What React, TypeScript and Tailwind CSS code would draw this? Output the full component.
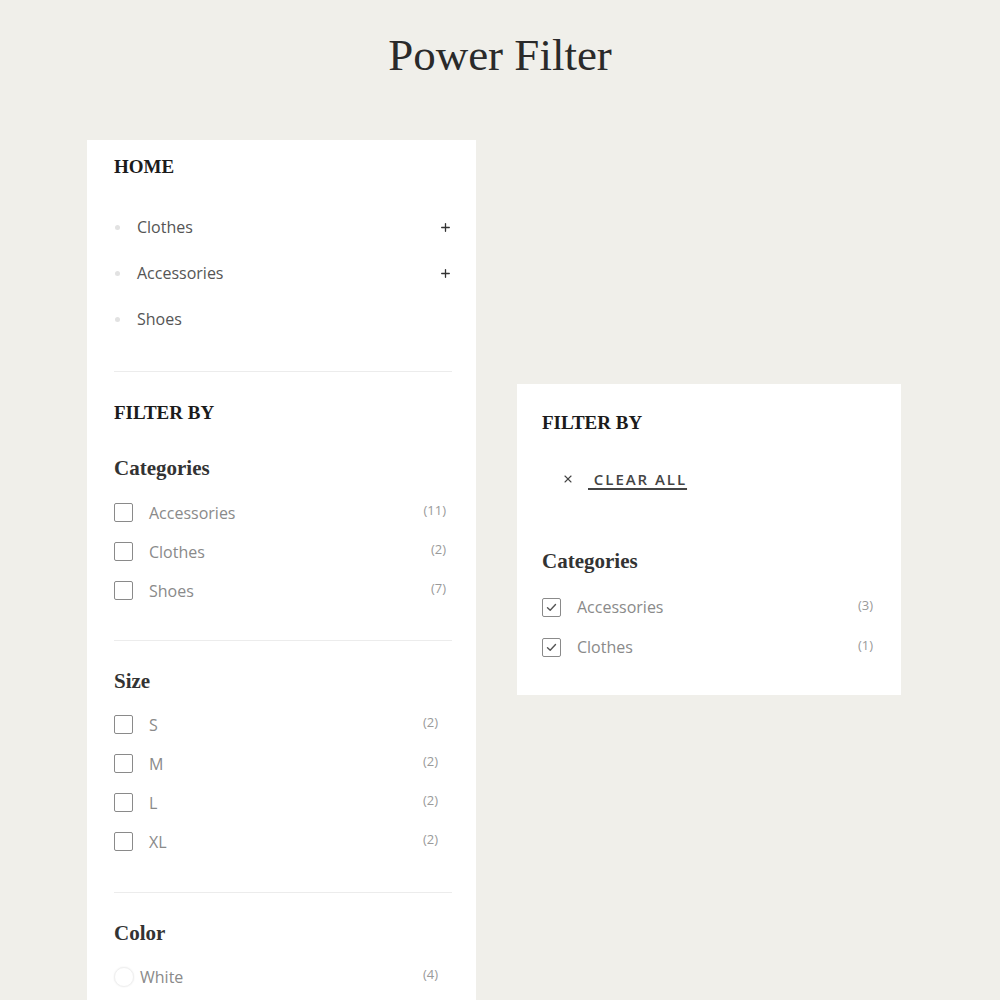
import { Plus, X } from 'lucide-react';

const serif = "font-['Liberation_Serif',serif]";
const sans = "font-['Open_Sans',sans-serif]";

const homeLinks = [
	{ label: 'Clothes', expandable: true },
	{ label: 'Accessories', expandable: true },
	{ label: 'Shoes', expandable: false },
];

const categories = [
	{ label: 'Accessories', count: 11 },
	{ label: 'Clothes', count: 2 },
	{ label: 'Shoes', count: 7 },
];

const sizes = [
	{ label: 'S', count: 2 },
	{ label: 'M', count: 2 },
	{ label: 'L', count: 2 },
	{ label: 'XL', count: 2 },
];

const activeCategories = [
	{ label: 'Accessories', count: 3 },
	{ label: 'Clothes', count: 1 },
];

const Checkbox = ({ checked = false }: { checked?: boolean }) => (
	<span className="flex items-center justify-center w-[19px] h-[19px] border-[1.5px] border-[#8a8a8a] rounded-[2px] bg-white shrink-0">
		{checked && (
			<svg width="13" height="13" viewBox="0 0 13 13" fill="none">
				<path d="M2.5 6.8 L5.2 9.3 L10.5 3.6" stroke="#555" strokeWidth="1.4" strokeLinecap="round" strokeLinejoin="round" />
			</svg>
		)}
	</span>
);

const FilterRow = ({
	label,
	count,
	checked,
	height,
	countPad,
}: {
	label: string;
	count: number;
	checked?: boolean;
	height: string;
	countPad: string;
}) => (
	<div className={`flex items-center ${height}`}>
		<Checkbox checked={checked} />
		<span className={`${sans} ml-[16px] text-[16px] text-[#8a8a8a]`}>{label}</span>
		<span className={`${sans} ml-auto ${countPad} -mt-[3px] text-[13px] text-[#9a9a9a]`}>({count})</span>
	</div>
);

const Divider = ({ className }: { className: string }) => (
	<div className={`h-px bg-[#ececec] ${className}`} />
);

const SideMenu = () => (
	<aside className="w-[389px] bg-white pl-[27px] pr-[24px] pt-[16px] pb-[40px] shrink-0">
		<h3 className={`${serif} text-[19px] leading-[22px] font-bold text-[#1b1b1b]`}>HOME</h3>

		<ul className="mt-[26px]">
			{homeLinks.map((link) => (
				<li key={link.label} className="flex items-center h-[46px]">
					<span className="w-[5px] h-[5px] rounded-full bg-[#e2e2e2] ml-[1px]" />
					<span className={`${sans} ml-[17px] text-[16px] text-[#555]`}>{link.label}</span>
					{link.expandable && <Plus className="ml-auto w-[13px] h-[13px] text-[#333]" strokeWidth={2.4} />}
				</li>
			))}
		</ul>

		<Divider className="mt-[29px]" />

		<h3 className={`${serif} mt-[30px] text-[19px] leading-[22px] font-bold text-[#1b1b1b]`}>FILTER BY</h3>

		<h4 className={`${serif} mt-[31px] text-[21px] leading-[26px] font-bold text-[#333]`}>Categories</h4>
		<div className="mt-[12px]">
			{categories.map((c) => (
				<FilterRow key={c.label} label={c.label} count={c.count} height="h-[39px]" countPad="pr-[6px]" />
			))}
		</div>

		<Divider className="mt-[30px]" />

		<h4 className={`${serif} mt-[27px] text-[21px] leading-[26px] font-bold text-[#333]`}>Size</h4>
		<div className="mt-[11px]">
			{sizes.map((s) => (
				<FilterRow key={s.label} label={s.label} count={s.count} height="h-[39px]" countPad="pr-[14px]" />
			))}
		</div>

		<Divider className="mt-[31px]" />

		<h4 className={`${serif} mt-[27px] text-[21px] leading-[26px] font-bold text-[#333]`}>Color</h4>
		<div className="mt-[11px] flex items-center h-[39px]">
			<span className="w-[20px] h-[20px] rounded-full bg-white border border-[#f0f0f0] shadow-[0_0_2px_rgba(0,0,0,0.08)]" />
			<span className={`${sans} ml-[6px] text-[16px] text-[#8a8a8a]`}>White</span>
			<span className={`${sans} ml-auto pr-[14px] -mt-[3px] text-[13px] text-[#9a9a9a]`}>(4)</span>
		</div>
	</aside>
);

const ActiveFilters = () => (
	<section className="w-[384px] bg-white pl-[25px] pr-[28px] pt-[28px] pb-[28px] mt-[244px] self-start">
		<h3 className={`${serif} text-[19px] leading-[22px] font-bold text-[#1b1b1b]`}>FILTER BY</h3>

		<div className="mt-[34px] flex items-center h-[22px] pl-[20px]">
			<X className="w-[12px] h-[12px] text-[#444]" strokeWidth={2.2} />
			<button className={`${sans} ml-[14px] text-[15px] font-semibold tracking-[0.13em] text-[#444] underline underline-offset-[3px] decoration-[1.5px]`}>
				&nbsp;CLEAR ALL
			</button>
		</div>

		<h4 className={`${serif} mt-[58px] text-[21px] leading-[26px] font-bold text-[#333]`}>Categories</h4>
		<div className="mt-[13px]">
			{activeCategories.map((c) => (
				<FilterRow key={c.label} label={c.label} count={c.count} checked height="h-[40px]" countPad="pr-0" />
			))}
		</div>
	</section>
);

export default function App() {
	return (
		<div className="min-h-[1000px] bg-[#f0efea] overflow-hidden">
			<h1 className={`${serif} pt-[26px] text-center text-[45px] leading-[58px] text-[#2a2a2a]`}>Power Filter</h1>
			<div className="flex gap-[41px] pl-[87px] mt-[56px]">
				<SideMenu />
				<ActiveFilters />
			</div>
		</div>
	);
}
